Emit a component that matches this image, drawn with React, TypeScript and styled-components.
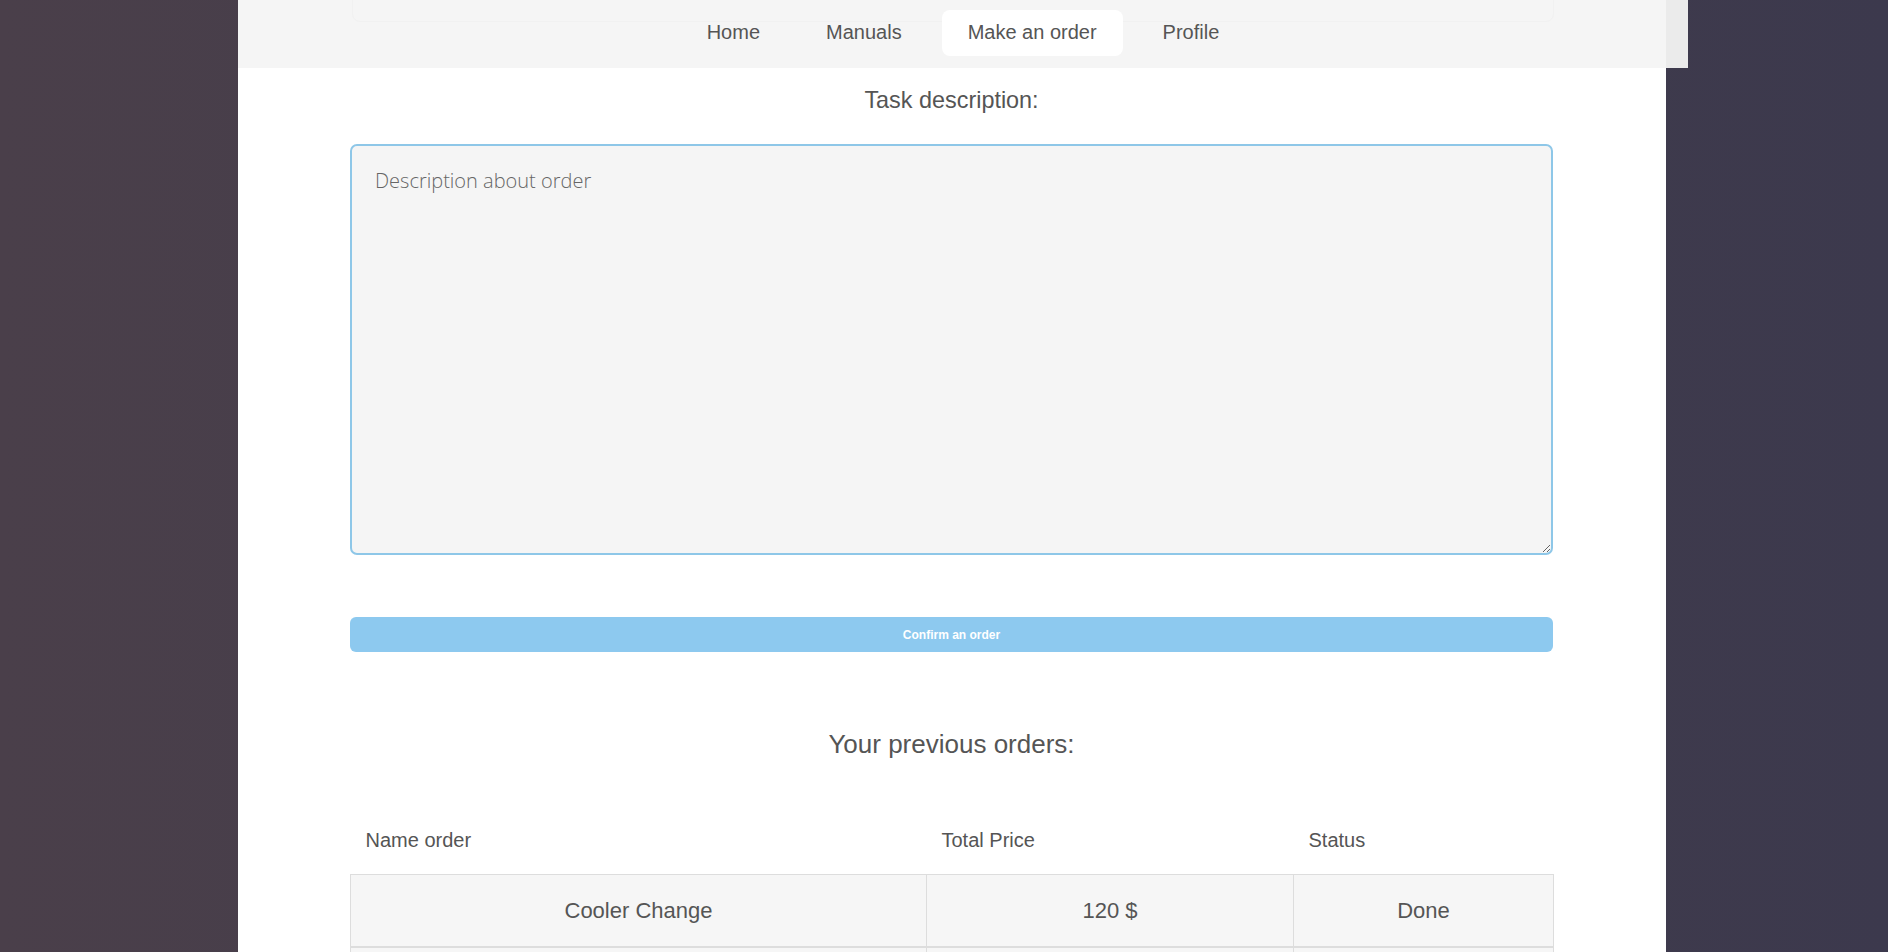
import React, { useEffect, useRef } from "react";
import styled, { createGlobalStyle } from "styled-components";

const Global = createGlobalStyle`
  html, body {
    margin: 0;
    padding: 0;
  }
  body {
    min-height: 100vh;
    background: linear-gradient(to right, #4a3f4a 0%, #433d4b 50%, #3c394d 100%);
    font-family: "Liberation Sans", Arial, sans-serif;
    overflow: hidden;
  }
`;

const Page = styled.div`
  display: flex;
  flex-direction: column;
  margin-left: 238px;
  width: 1450px;
`;

const Header = styled.header`
  position: relative;
  height: 68px;
  width: 1450px;
  box-sizing: border-box;
  padding-top: 10px;
  background: linear-gradient(to right, #f5f5f5 1428px, #ebebeb 1428px);
  display: flex;
  align-items: flex-start;
  justify-content: center;
  overflow: hidden;
`;

const GhostField = styled.div`
  position: absolute;
  left: 114px;
  top: -40px;
  width: 1200px;
  height: 60px;
  border: 1px solid #f1f1f1;
  border-radius: 8px;
`;

const Nav = styled.nav`
  position: relative;
  display: flex;
  align-items: center;
  gap: 14px;
`;

const NavItem = styled.a<{ $active?: boolean }>`
  display: block;
  height: 46px;
  line-height: 44px;
  padding: 0 26px;
  border-radius: 8px;
  font-size: 20px;
  color: #555;
  text-decoration: none;
  background: ${(p) => (p.$active ? "#ffffff" : "transparent")};
  cursor: pointer;
`;

const Panel = styled.main`
  width: 1428px;
  background: #ffffff;
  box-sizing: border-box;
  padding: 0 113px 0 112px;
  display: flex;
  flex-direction: column;
  min-height: 900px;
`;

const Title = styled.h2<{ $size: number; $top: number }>`
  margin: ${(p) => p.$top}px 0 0;
  font-weight: 400;
  font-size: ${(p) => p.$size}px;
  line-height: 30px;
  color: #555;
  text-align: center;
`;

const TextArea = styled.textarea`
  margin-top: 29px;
  width: 1203px;
  height: 411px;
  box-sizing: border-box;
  border: 2px solid #8ec7e8;
  border-radius: 7px;
  background: #f5f5f5;
  padding: 21px 23px;
  font-family: "Open Sans", "Noto Sans", sans-serif;
  font-weight: 300;
  font-size: 20px;
  line-height: 28px;
  color: #666;
  caret-color: #333;
  outline: none;
`;

const ConfirmButton = styled.button`
  margin-top: 62px;
  width: 1203px;
  height: 35px;
  border: none;
  border-radius: 6px;
  background: #8dc9ef;
  color: #ffffff;
  font-family: "Liberation Sans", Arial, sans-serif;
  font-weight: 700;
  font-size: 12px;
  cursor: pointer;
`;

const Table = styled.table`
  margin-top: 48px;
  width: 1203px;
  border-collapse: collapse;
  table-layout: fixed;
  color: #555;
`;

const HeadCell = styled.th`
  height: 67px;
  padding: 0 0 0 15px;
  text-align: left;
  vertical-align: middle;
  font-weight: 400;
  font-size: 20px;
`;

const Cell = styled.td`
  height: 71px;
  padding: 0;
  text-align: center;
  vertical-align: middle;
  font-size: 22px;
  background: #f6f6f6;
  border-left: 1px solid #dddddd;
  border-right: 1px solid #dddddd;
  border-top: 1px solid #dddddd;
  border-bottom: 2px solid #dddddd;
`;

const orders = [
  { id: 1, name: "Cooler Change", price: "120 $", status: "Done" },
  { id: 2, name: "", price: "", status: "" },
];

export default function App() {
  const ref = useRef<HTMLTextAreaElement>(null);
  useEffect(() => {
    const el = ref.current;
    if (el) {
      el.focus();
      const n = el.value.length;
      el.setSelectionRange(n, n);
    }
  }, []);

  return (
    <>
      <Global />
      <Page>
        <Header>
          <GhostField />
          <Nav>
            <NavItem>Home</NavItem>
            <NavItem>Manuals</NavItem>
            <NavItem $active>Make an order</NavItem>
            <NavItem>Profile</NavItem>
          </Nav>
        </Header>
        <Panel>
          <Title $size={23.4} $top={17}>Task description:</Title>
          <TextArea ref={ref} defaultValue="Description about order" />
          <ConfirmButton>Confirm an order</ConfirmButton>
          <Title $size={26} $top={77}>Your previous orders:</Title>
          <Table>
            <colgroup>
              <col style={{ width: 576 }} />
              <col style={{ width: 367 }} />
              <col style={{ width: 260 }} />
            </colgroup>
            <thead>
              <tr>
                <HeadCell>Name order</HeadCell>
                <HeadCell>Total Price</HeadCell>
                <HeadCell>Status</HeadCell>
              </tr>
            </thead>
            <tbody>
              {orders.map((o) => (
                <tr key={o.id}>
                  <Cell>{o.name}</Cell>
                  <Cell>{o.price}</Cell>
                  <Cell>{o.status}</Cell>
                </tr>
              ))}
            </tbody>
          </Table>
        </Panel>
      </Page>
    </>
  );
}
